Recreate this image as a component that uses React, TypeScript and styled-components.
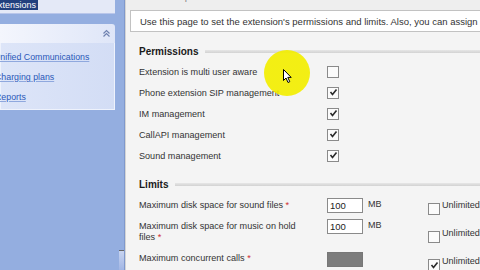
import React from "react";
import styled, { createGlobalStyle } from "styled-components";

const Global = createGlobalStyle`
  html, body { margin: 0; padding: 0; width: 480px; height: 270px; overflow: hidden; }
  body { font-family: "Liberation Sans", Arial, sans-serif; font-size: 9px; color: #222; }
  #root { width: 480px; height: 270px; }
`;

const Page = styled.div`
  position: relative;
  display: flex;
  width: 480px;
  height: 270px;
  overflow: hidden;
  background: #94aee0;
`;

const Sidebar = styled.div`
  width: 125px;
  flex: none;
  display: flex;
  flex-direction: column;
  background: #94aee0;
  border-right: 1px solid #7f98cc;
  box-sizing: border-box;
`;

const TopCard = styled.div`
  flex: none;
  width: 115px;
  height: 14px;
  background: #e4e9f7;
  border-bottom: 1px solid #b9c6ea;
  box-sizing: border-box;
`;

const Selected = styled.div`
  display: inline-block;
  height: 10px;
  line-height: 10px;
  padding: 0 2px 0 0;
  margin-left: -8px;
  background: #22407e;
  color: #fff;
  font-size: 9px;
`;

const Card = styled.div`
  flex: none;
  margin-top: 10px;
  width: 115px;
  display: flex;
  flex-direction: column;
`;

const CardHead = styled.div`
  flex: none;
  height: 19px;
  background: linear-gradient(to right, #f4f6fd, #dfe6f8);
  border-radius: 0 3px 0 0;
  display: flex;
  align-items: center;
  justify-content: flex-end;
  padding-right: 2px;
`;

const Chevron = styled.span`
  width: 13px;
  height: 13px;
  display: flex;
  align-items: center;
  justify-content: center;
`;

const CardBody = styled.div`
  flex: none;
  height: 67px;
  background: linear-gradient(to right, #dde5f8, #d3ddf5);
  border: 1px solid #eef2fc;
  border-top: none;
  display: flex;
  flex-direction: column;
  padding-top: 8px;
  gap: 8px;
  box-sizing: border-box;
`;

const Link = styled.a<{ $off: number }>`
  color: #2a58b8;
  text-decoration: underline;
  text-decoration-color: #8fa8de;
  font-size: 8.8px;
  line-height: 12px;
  white-space: nowrap;
  margin-left: ${(p) => p.$off}px;
`;

const Content = styled.div`
  flex: 1;
  display: flex;
  flex-direction: column;
  background: #f4f4f4;
  border-left: 1px solid #d4d4d4;
`;

const TopStrip = styled.div`
  flex: none;
  height: 10px;
  background: #eeeeee;
  overflow: hidden;
  padding-left: 12px;
`;

const TopTitle = styled.div`
  margin-top: -9px;
  font-size: 10px;
  color: #888;
  white-space: nowrap;
`;

const Desc = styled.div`
  flex: none;
  margin-left: 4px;
  height: 22px;
  background: #fff;
  border: 1px solid #c2c2c2;
  border-right: none;
  box-sizing: border-box;
  display: flex;
  align-items: center;
  padding-left: 9px;
  white-space: nowrap;
  overflow: hidden;
  font-size: 9.5px;
  color: #333;
`;

const Body = styled.div`
  flex: none;
  padding-left: 13px;
  display: flex;
  flex-direction: column;
`;

const SectionHead = styled.div<{ $top: number }>`
  flex: none;
  margin-top: ${(p) => p.$top}px;
  height: 12px;
  display: flex;
  align-items: center;
  gap: 7px;
  font-weight: bold;
  font-size: 10px;
  color: #1a1a1a;
`;

const HeadLine = styled.div`
  flex: 1;
  height: 3px;
  background: linear-gradient(to bottom, #e6e6e6, #d2d2d2);
`;

const Spacer = styled.div<{ $h: number }>`
  flex: none;
  height: ${(p) => p.$h}px;
`;

const PermRow = styled.div`
  flex: none;
  height: 21px;
  display: grid;
  grid-template-columns: 188px 20px;
  align-items: center;
  color: #333;
  font-size: 9.1px;
`;

const Box = styled.span<{ $w?: number }>`
  width: ${(p) => p.$w ?? 12}px;
  height: ${(p) => p.$w ?? 12}px;
  border: 1px solid #8a8a8a;
  background: #fbfbfb;
  box-sizing: border-box;
  display: flex;
  align-items: center;
  justify-content: center;
`;

const LimitRow = styled.div<{ $h: number }>`
  flex: none;
  height: ${(p) => p.$h}px;
  display: grid;
  grid-template-columns: 188px 101px auto;
  color: #333;
  font-size: 9.1px;
`;

const LimitLabel = styled.div<{ $pt: number }>`
  padding-top: ${(p) => p.$pt}px;
  line-height: 11px;
  width: 168px;
`;

const Req = styled.span`
  color: #d03030;
`;

const InputCell = styled.div`
  display: flex;
  align-items: flex-start;
  gap: 5px;
`;

const TextInput = styled.div<{ $disabled?: boolean }>`
  width: 36px;
  height: 15px;
  box-sizing: border-box;
  border: 1px solid ${(p) => (p.$disabled ? "#777" : "#8a8a8a")};
  background: ${(p) => (p.$disabled ? "#7c7c7c" : "#fff")};
  padding-left: 2px;
  line-height: 13px;
  font-size: 9.5px;
  color: #222;
`;

const Unit = styled.span`
  font-size: 9px;
  line-height: 11px;
  margin-top: 1px;
`;

const UnlimitedCell = styled.div<{ $pt: number }>`
  padding-top: ${(p) => p.$pt}px;
  display: flex;
  align-items: flex-start;
  gap: 2px;
  white-space: nowrap;
`;

const UnlimitedText = styled.span`
  margin-top: -3px;
  line-height: 11px;
`;

const Splitter = styled.div`
  position: absolute;
  left: 119px;
  top: 250px;
  width: 5px;
  height: 20px;
  background: linear-gradient(to bottom, #c8d4f0, #9fb4e4);
  border-top: 1px solid #666;
`;

const Highlight = styled.div`
  position: absolute;
  left: 264px;
  top: 50px;
  width: 46px;
  height: 46px;
  border-radius: 50%;
  background: radial-gradient(circle, #f3ee00 0%, #f3ee00 80%, rgba(243, 238, 0, 0.4) 95%, rgba(243, 238, 0, 0) 100%);
  opacity: 0.92;
`;

const Cursor = styled.svg`
  position: absolute;
  left: 283px;
  top: 69px;
`;

const Check = () => (
  <svg width="9" height="9" viewBox="0 0 9 9">
    <path d="M1.5 4 L3.5 6.5 L7.5 1.5" stroke="#2a2a2a" strokeWidth="1.6" fill="none" />
  </svg>
);

const CheckBox = ({ checked, size }: { checked?: boolean; size?: number }) => (
  <Box $w={size}>{checked ? <Check /> : null}</Box>
);

const perms: { label: string; checked: boolean }[] = [
  { label: "Extension is multi user aware", checked: false },
  { label: "Phone extension SIP management", checked: true },
  { label: "IM management", checked: true },
  { label: "CallAPI management", checked: true },
  { label: "Sound management", checked: true },
];

export default function App() {
  return (
    <>
      <Global />
      <Page>
        <Sidebar>
          <TopCard>
            <Selected>Extensions</Selected>
          </TopCard>
          <Card>
            <CardHead>
              <Chevron>
                <svg width="9" height="9" viewBox="0 0 9 9">
                  <path d="M1.5 4.5 L4.5 1.5 L7.5 4.5 M1.5 7.5 L4.5 4.5 L7.5 7.5" stroke="#6f82b0" strokeWidth="1.2" fill="none" />
                </svg>
              </Chevron>
            </CardHead>
            <CardBody>
              <Link $off={-7}>Unified Communications</Link>
              <Link $off={-6}>Charging plans</Link>
              <Link $off={-6}>Reports</Link>
            </CardBody>
          </Card>
        </Sidebar>
        <Content>
          <TopStrip>
            <TopTitle>Extension permissions and limits</TopTitle>
          </TopStrip>
          <Desc>Use this page to set the extension's permissions and limits. Also, you can assign</Desc>
          <Body>
            <SectionHead $top={13}>
              Permissions
              <HeadLine />
            </SectionHead>
            <Spacer $h={4} />
            {perms.map((p) => (
              <PermRow key={p.label}>
                <span>{p.label}</span>
                <CheckBox checked={p.checked} />
              </PermRow>
            ))}
            <SectionHead $top={12}>
              Limits
              <HeadLine />
            </SectionHead>
            <Spacer $h={8} />
            <LimitRow $h={21}>
              <LimitLabel $pt={2}>
                Maximum disk space for sound files <Req>*</Req>
              </LimitLabel>
              <InputCell>
                <TextInput>100</TextInput>
                <Unit>MB</Unit>
              </InputCell>
              <UnlimitedCell $pt={5}>
                <CheckBox size={12} />
                <UnlimitedText>Unlimited</UnlimitedText>
              </UnlimitedCell>
            </LimitRow>
            <LimitRow $h={33}>
              <LimitLabel $pt={2}>
                Maximum disk space for music on hold files <Req>*</Req>
              </LimitLabel>
              <InputCell>
                <TextInput>100</TextInput>
                <Unit>MB</Unit>
              </InputCell>
              <UnlimitedCell $pt={12}>
                <CheckBox size={12} />
                <UnlimitedText>Unlimited</UnlimitedText>
              </UnlimitedCell>
            </LimitRow>
            <LimitRow $h={20}>
              <LimitLabel $pt={1}>
                Maximum concurrent calls <Req>*</Req>
              </LimitLabel>
              <InputCell>
                <TextInput $disabled />
              </InputCell>
              <UnlimitedCell $pt={7}>
                <CheckBox size={12} checked />
                <UnlimitedText>Unlimited</UnlimitedText>
              </UnlimitedCell>
            </LimitRow>
          </Body>
        </Content>
        <Splitter />
        <Highlight />
        <Cursor width="10" height="15" viewBox="0 0 10 15">
          <path d="M0.5 0.5 L0.5 11.5 L3 9 L5 13.5 L6.8 12.7 L4.8 8.4 L8.2 8.4 Z" fill="#fff" stroke="#000" strokeWidth="1" />
        </Cursor>
      </Page>
    </>
  );
}
